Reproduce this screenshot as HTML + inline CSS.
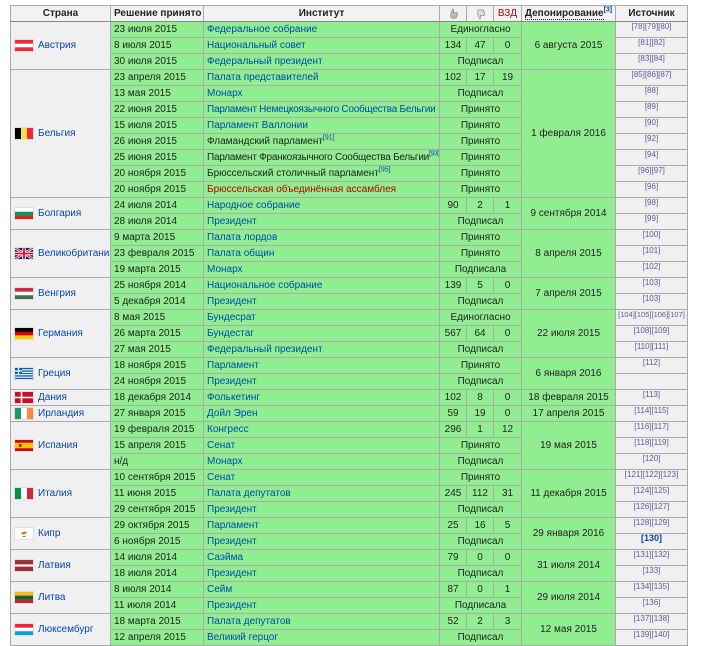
<!DOCTYPE html>
<html><head><meta charset="utf-8">
<style>
body{margin:0;background:#fff;font-family:"Liberation Sans",Arial,sans-serif;font-size:10px;color:#222}
table{position:absolute;left:10px;top:5px;border-collapse:collapse;table-layout:fixed;width:677px}
td,th{border:1px solid #aaa;padding:0 3px;height:15px;line-height:15px;white-space:nowrap;overflow:hidden}
th{background:#f2f2f2;font-weight:bold;text-align:center;border-bottom:1px solid #888;font-size:10px}
th svg{display:block;margin:0 auto}
td{background:#90ee90}
td.c{background:#f0f0f0;text-align:left;padding-left:3px}
td.s{background:#f0f0f0;text-align:center;vertical-align:top;font-size:8px;line-height:9px;color:#5a5a9a}
td.v,td.d{text-align:center}
td.t{letter-spacing:-0.25px}
a{color:#0645ad;text-decoration:none}
a.r{color:#ba0000}
sup{font-size:7px;line-height:0;color:#0645ad}
svg.f{vertical-align:middle;margin-right:4px;border:1px solid #ddd}
.c a{vertical-align:middle}
</style></head><body>
<table>
<colgroup><col style="width:100px"><col style="width:93px"><col style="width:236px"><col style="width:27px"><col style="width:27px"><col style="width:28px"><col style="width:94px"><col style="width:72px"></colgroup>
<tr><th>Страна</th><th style="text-align:left">Решение принято</th><th>Институт</th>
<th><svg width="11" height="12" viewBox="0 0 12 13"><path d="M3 6 L5 1 Q7 1 6 5 L10 5 Q11 6 10 7 Q11 9 9 9 Q10 11 8 11 L4 11 L3 10 Z" fill="#bbb" stroke="#888" stroke-width=".7"/></svg></th>
<th><svg width="11" height="12" viewBox="0 0 12 13"><path d="M3 7 L5 12 Q7 12 6 8 L10 8 Q11 7 10 6 Q11 4 9 4 Q10 2 8 2 L4 2 L3 3 Z" fill="#ddd" stroke="#888" stroke-width=".7"/></svg></th>
<th style="color:#ba0000;font-weight:normal">ВЗД</th>
<th style="padding:0"><span style="border-bottom:1px dotted #222">Депонирование</span><sup>[3]</sup></th><th>Источник</th></tr>

<tr><td class="c" rowspan="3"><svg class="f" width="18" height="11"><rect width="18" height="11" fill="#ed2939"/><rect y="3.7" width="18" height="3.6" fill="#fff"/></svg><a>Австрия</a></td><td>23 июля 2015</td><td><a>Федеральное собрание</a></td><td class="v" colspan="3">Единогласно</td><td class="d" rowspan="3">6 августа 2015</td><td class="s">[78][79][80]</td></tr>
<tr><td>8 июля 2015</td><td><a>Национальный совет</a></td><td class="v">134</td><td class="v">47</td><td class="v">0</td><td class="s">[81][82]</td></tr>
<tr><td>30 июля 2015</td><td><a>Федеральный президент</a></td><td class="v" colspan="3">Подписал</td><td class="s">[83][84]</td></tr>

<tr><td class="c" rowspan="8"><svg class="f" width="18" height="11"><rect width="6" height="11" fill="#000"/><rect x="6" width="6" height="11" fill="#fae042"/><rect x="12" width="6" height="11" fill="#ed2939"/></svg><a>Бельгия</a></td><td>23 апреля 2015</td><td><a>Палата представителей</a></td><td class="v">102</td><td class="v">17</td><td class="v">19</td><td class="d" rowspan="8">1 февраля 2016</td><td class="s">[85][86][87]</td></tr>
<tr><td>13 мая 2015</td><td><a>Монарх</a></td><td class="v" colspan="3">Подписал</td><td class="s">[88]</td></tr>
<tr><td>22 июня 2015</td><td class="t"><a>Парламент Немецкоязычного Сообщества Бельгии</a></td><td class="v" colspan="3">Принято</td><td class="s">[89]</td></tr>
<tr><td>15 июля 2015</td><td><a>Парламент Валлонии</a></td><td class="v" colspan="3">Принято</td><td class="s">[90]</td></tr>
<tr><td>26 июня 2015</td><td>Фламандский парламент<sup>[91]</sup></td><td class="v" colspan="3">Принято</td><td class="s">[92]</td></tr>
<tr><td>25 июня 2015</td><td class="t">Парламент Франкоязычного Сообщества Бельгии<sup>[93]</sup></td><td class="v" colspan="3">Принято</td><td class="s">[94]</td></tr>
<tr><td>20 ноября 2015</td><td>Брюссельский столичный парламент<sup>[95]</sup></td><td class="v" colspan="3">Принято</td><td class="s">[96][97]</td></tr>
<tr><td>20 ноября 2015</td><td><a class="r">Брюссельская объединённая ассамблея</a></td><td class="v" colspan="3">Принято</td><td class="s">[96]</td></tr>

<tr><td class="c" rowspan="2"><svg class="f" width="18" height="11"><rect width="18" height="11" fill="#fff"/><rect y="3.7" width="18" height="3.7" fill="#00966e"/><rect y="7.3" width="18" height="3.7" fill="#d62612"/></svg><a>Болгария</a></td><td>24 июля 2014</td><td><a>Народное собрание</a></td><td class="v">90</td><td class="v">2</td><td class="v">1</td><td class="d" rowspan="2">9 сентября 2014</td><td class="s">[98]</td></tr>
<tr><td>28 июля 2014</td><td><a>Президент</a></td><td class="v" colspan="3">Подписал</td><td class="s">[99]</td></tr>

<tr><td class="c" rowspan="3"><svg class="f" width="18" height="11"><rect width="18" height="11" fill="#012169"/><path d="M0 0L18 11M18 0L0 11" stroke="#fff" stroke-width="2.5"/><path d="M0 0L18 11M18 0L0 11" stroke="#c8102e" stroke-width="1"/><path d="M9 0V11M0 5.5H18" stroke="#fff" stroke-width="3.5"/><path d="M9 0V11M0 5.5H18" stroke="#c8102e" stroke-width="1.8"/></svg><a>Великобритания</a></td><td>9 марта 2015</td><td><a>Палата лордов</a></td><td class="v" colspan="3">Принято</td><td class="d" rowspan="3">8 апреля 2015</td><td class="s">[100]</td></tr>
<tr><td>23 февраля 2015</td><td><a>Палата общин</a></td><td class="v" colspan="3">Принято</td><td class="s">[101]</td></tr>
<tr><td>19 марта 2015</td><td><a>Монарх</a></td><td class="v" colspan="3">Подписала</td><td class="s">[102]</td></tr>

<tr><td class="c" rowspan="2"><svg class="f" width="18" height="11"><rect width="18" height="11" fill="#cd2a3e"/><rect y="3.7" width="18" height="3.7" fill="#fff"/><rect y="7.3" width="18" height="3.7" fill="#436f4d"/></svg><a>Венгрия</a></td><td>25 ноября 2014</td><td><a>Национальное собрание</a></td><td class="v">139</td><td class="v">5</td><td class="v">0</td><td class="d" rowspan="2">7 апреля 2015</td><td class="s">[103]</td></tr>
<tr><td>5 декабря 2014</td><td><a>Президент</a></td><td class="v" colspan="3">Подписал</td><td class="s">[103]</td></tr>

<tr><td class="c" rowspan="3"><svg class="f" width="18" height="11"><rect width="18" height="11" fill="#000"/><rect y="3.7" width="18" height="3.7" fill="#dd0000"/><rect y="7.3" width="18" height="3.7" fill="#ffce00"/></svg><a>Германия</a></td><td>8 мая 2015</td><td><a>Бундесрат</a></td><td class="v" colspan="3">Единогласно</td><td class="d" rowspan="3">22 июля 2015</td><td class="s" style="font-size:7.5px;padding:0">[104][105][106][107]</td></tr>
<tr><td>26 марта 2015</td><td><a>Бундестаг</a></td><td class="v">567</td><td class="v">64</td><td class="v">0</td><td class="s">[108][109]</td></tr>
<tr><td>27 мая 2015</td><td><a>Федеральный президент</a></td><td class="v" colspan="3">Подписал</td><td class="s">[110][111]</td></tr>

<tr><td class="c" rowspan="2"><svg class="f" width="18" height="11"><rect width="18" height="11" fill="#0d5eaf"/><path d="M0 1.8H18M0 4.3H18M0 6.7H18M0 9.2H18" stroke="#fff" stroke-width="1.2"/><rect width="7" height="6" fill="#0d5eaf"/><path d="M3.5 0V6M0 3H7" stroke="#fff" stroke-width="1.2"/></svg><a>Греция</a></td><td>18 ноября 2015</td><td><a>Парламент</a></td><td class="v" colspan="3">Принято</td><td class="d" rowspan="2">6 января 2016</td><td class="s">[112]</td></tr>
<tr><td>24 ноября 2015</td><td><a>Президент</a></td><td class="v" colspan="3">Подписал</td><td class="s"></td></tr>

<tr><td class="c"><svg class="f" width="18" height="11"><rect width="18" height="11" fill="#c8102e"/><path d="M6.5 0V11M0 5.5H18" stroke="#fff" stroke-width="1.6"/></svg><a>Дания</a></td><td>18 декабря 2014</td><td><a>Фолькетинг</a></td><td class="v">102</td><td class="v">8</td><td class="v">0</td><td class="d">18 февраля 2015</td><td class="s">[113]</td></tr>
<tr><td class="c"><svg class="f" width="18" height="11"><rect width="6" height="11" fill="#169b62"/><rect x="6" width="6" height="11" fill="#fff"/><rect x="12" width="6" height="11" fill="#ff883e"/></svg><a>Ирландия</a></td><td>27 января 2015</td><td><a>Дойл Эрен</a></td><td class="v">59</td><td class="v">19</td><td class="v">0</td><td class="d">17 апреля 2015</td><td class="s">[114][115]</td></tr>

<tr><td class="c" rowspan="3"><svg class="f" width="18" height="11"><rect width="18" height="11" fill="#c60b1e"/><rect y="2.75" width="18" height="5.5" fill="#ffc400"/><rect x="4" y="4" width="2.5" height="3" fill="#ad1519"/></svg><a>Испания</a></td><td>19 февраля 2015</td><td><a>Конгресс</a></td><td class="v">296</td><td class="v">1</td><td class="v">12</td><td class="d" rowspan="3">19 мая 2015</td><td class="s">[116][117]</td></tr>
<tr><td>15 апреля 2015</td><td><a>Сенат</a></td><td class="v" colspan="3">Принято</td><td class="s">[118][119]</td></tr>
<tr><td>н/д</td><td><a>Монарх</a></td><td class="v" colspan="3">Подписал</td><td class="s">[120]</td></tr>

<tr><td class="c" rowspan="3"><svg class="f" width="18" height="11"><rect width="6" height="11" fill="#009246"/><rect x="6" width="6" height="11" fill="#fff"/><rect x="12" width="6" height="11" fill="#ce2b37"/></svg><a>Италия</a></td><td>10 сентября 2015</td><td><a>Сенат</a></td><td class="v" colspan="3">Принято</td><td class="d" rowspan="3">11 декабря 2015</td><td class="s">[121][122][123]</td></tr>
<tr><td>11 июня 2015</td><td><a>Палата депутатов</a></td><td class="v">245</td><td class="v">112</td><td class="v">31</td><td class="s">[124][125]</td></tr>
<tr><td>29 сентября 2015</td><td><a>Президент</a></td><td class="v" colspan="3">Подписал</td><td class="s">[126][127]</td></tr>

<tr><td class="c" rowspan="2"><svg class="f" width="18" height="11"><rect width="18" height="11" fill="#fff"/><path d="M6 5Q9 3 12 4Q11 6.5 7.5 6.5Z" fill="#d57800"/><path d="M7.5 8Q9 9 10.5 8" stroke="#4e5b31" stroke-width=".8" fill="none"/></svg><a>Кипр</a></td><td>29 октября 2015</td><td><a>Парламент</a></td><td class="v">25</td><td class="v">16</td><td class="v">5</td><td class="d" rowspan="2">29 января 2016</td><td class="s">[128][129]</td></tr>
<tr><td>6 ноября 2015</td><td><a>Президент</a></td><td class="v" colspan="3">Подписал</td><td class="s" style="font-weight:bold;color:#0645ad;font-size:9px">[130]</td></tr>

<tr><td class="c" rowspan="2"><svg class="f" width="18" height="11"><rect width="18" height="11" fill="#9e3039"/><rect y="4.4" width="18" height="2.2" fill="#fff"/></svg><a>Латвия</a></td><td>14 июля 2014</td><td><a>Саэйма</a></td><td class="v">79</td><td class="v">0</td><td class="v">0</td><td class="d" rowspan="2">31 июля 2014</td><td class="s">[131][132]</td></tr>
<tr><td>18 июля 2014</td><td><a>Президент</a></td><td class="v" colspan="3">Подписал</td><td class="s">[133]</td></tr>

<tr><td class="c" rowspan="2"><svg class="f" width="18" height="11"><rect width="18" height="11" fill="#fdb913"/><rect y="3.7" width="18" height="3.7" fill="#006a44"/><rect y="7.3" width="18" height="3.7" fill="#c1272d"/></svg><a>Литва</a></td><td>8 июля 2014</td><td><a>Сейм</a></td><td class="v">87</td><td class="v">0</td><td class="v">1</td><td class="d" rowspan="2">29 июля 2014</td><td class="s">[134][135]</td></tr>
<tr><td>11 июля 2014</td><td><a>Президент</a></td><td class="v" colspan="3">Подписала</td><td class="s">[136]</td></tr>

<tr><td class="c" rowspan="2"><svg class="f" width="18" height="11"><rect width="18" height="11" fill="#ed2939"/><rect y="3.7" width="18" height="3.7" fill="#fff"/><rect y="7.3" width="18" height="3.7" fill="#00a1de"/></svg><a>Люксембург</a></td><td>18 марта 2015</td><td><a>Палата депутатов</a></td><td class="v">52</td><td class="v">2</td><td class="v">3</td><td class="d" rowspan="2">12 мая 2015</td><td class="s">[137][138]</td></tr>
<tr><td>12 апреля 2015</td><td><a>Великий герцог</a></td><td class="v" colspan="3">Подписал</td><td class="s">[139][140]</td></tr>
</table>
</body></html>
